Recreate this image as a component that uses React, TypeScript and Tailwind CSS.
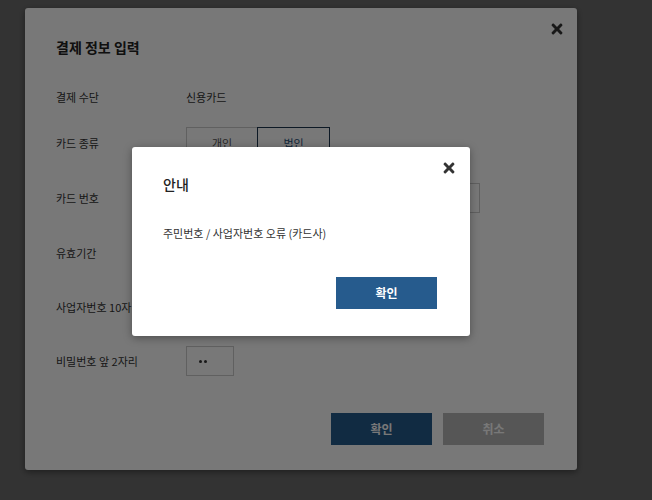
import { FaTimes } from 'react-icons/fa';

const font = { fontFamily: '"Noto Sans CJK KR", "Noto Sans", sans-serif' };

function Row({ label, mt, h = 'h-[30px]', children }: { label: string; mt: string; h?: string; children?: React.ReactNode }) {
    return (
        <div className={`flex items-center ${h} ${mt}`}>
            <div className="w-[130px] shrink-0 text-[11px] text-[#333]">{label}</div>
            {children}
        </div>
    );
}

export default function App() {
    return (
        <div className="relative w-[652px] h-[500px] overflow-hidden bg-[#6d6d6d]" style={font}>
            {/* payment modal */}
            <div className="ml-[25px] mt-[8px] w-[552px] h-[462px] bg-white rounded-[3px] shadow-[0_2px_6px_rgba(0,0,0,0.4)] relative pl-[31px] pt-[29px]">
                <button className="absolute top-[13px] right-[12px] text-[#333]">
                    <FaTimes size={16} />
                </button>
                <h2 className="text-[14px] leading-[20px] font-bold text-[#222]">결제 정보 입력</h2>

                <Row label="결제 수단" mt="mt-[25px]">
                    <span className="text-[11px] text-[#333]">신용카드</span>
                </Row>
                <Row label="카드 종류" mt="mt-[15px]" h="h-[32px]">
                    <div className="flex">
                        <button className="w-[72px] h-[32px] border border-[#ccc] text-[11px] text-[#555]">개인</button>
                        <button className="w-[73px] h-[32px] -ml-px border border-[#1d3550] text-[11px] text-[#1f4e79]">법인</button>
                    </div>
                </Row>
                <Row label="카드 번호" mt="mt-[24px]">
                    <input className="w-[294px] h-[30px] border border-[#ccc] px-2 text-[11px]" />
                </Row>
                <Row label="유효기간" mt="mt-[25px]">
                    <div className="flex gap-2">
                        <div className="w-[90px] h-[30px] border border-[#ccc]" />
                        <div className="w-[90px] h-[30px] border border-[#ccc]" />
                    </div>
                </Row>
                <Row label="사업자번호 10자리" mt="mt-[24px]">
                    <input className="w-[200px] h-[30px] border border-[#ccc] px-2 text-[11px]" />
                </Row>
                <Row label="비밀번호 앞 2자리" mt="mt-[24px]">
                    <div className="w-[48px] h-[30px] border border-[#ccc] flex items-center gap-[2px] pl-[12px]">
                        <span className="w-[3px] h-[3px] rounded-full bg-[#333]" />
                        <span className="w-[3px] h-[3px] rounded-full bg-[#333]" />
                    </div>
                </Row>

                <div className="flex justify-end gap-[11px] pr-[33px] mt-[37px]">
                    <button className="w-[101px] h-[32px] bg-[#265b8d] text-white text-[12px] font-bold">확인</button>
                    <button className="w-[101px] h-[32px] bg-[#b8b8b8] text-white text-[12px] font-bold">취소</button>
                </div>
            </div>

            {/* dim overlay */}
            <div className="absolute inset-0 bg-black/[0.53]" />

            {/* alert dialog */}
            <div className="absolute left-[132px] top-[147px] w-[338px] h-[189px] bg-white rounded-[3px] shadow-[0_2px_8px_rgba(0,0,0,0.35)] pl-[31px] pt-[26px]">
                <button className="absolute top-[13px] right-[13px] text-[#333]">
                    <FaTimes size={16} />
                </button>
                <h3 className="text-[14px] leading-[22px] font-medium text-[#222]">안내</h3>
                <p className="mt-[29px] text-[11px] leading-[18px] text-[#333]">주민번호 / 사업자번호 오류 (카드사)</p>
                <div className="flex justify-end pr-[33px] mt-[35px]">
                    <button className="w-[101px] h-[32px] bg-[#265b8d] text-white text-[12px] font-bold">확인</button>
                </div>
            </div>
        </div>
    );
}
